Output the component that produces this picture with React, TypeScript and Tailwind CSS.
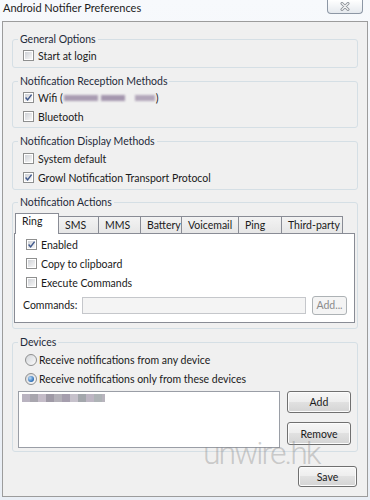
import React from 'react';

const FONT = "font-['Lato','Liberation_Sans',sans-serif]";

const CheckBox: React.FC<{ checked?: boolean }> = ({ checked }) => (
  <span className="relative w-[11px] h-[11px] shrink-0 border border-[#8e8f8f] bg-white p-[1px]">
    <span className="block w-full h-full bg-gradient-to-br from-[#cfd2d7] to-[#f7f7f7]" />
    {checked && (
      <svg className="absolute left-0 top-0" width="9" height="9" viewBox="0 0 9 9">
        <path d="M1.6 4.6 L3.6 6.9 L7.6 1.6" fill="none" stroke="#40598c" strokeWidth="1.5" />
      </svg>
    )}
  </span>
);

const Radio: React.FC<{ checked?: boolean }> = ({ checked }) => (
  <span className="w-[12px] h-[12px] shrink-0 rounded-full border border-[#8e8f8f] bg-gradient-to-br from-[#d3d6da] to-[#fbfbfb] flex items-center justify-center">
    {checked && (
      <span className="w-[6px] h-[6px] rounded-full bg-[radial-gradient(circle_at_35%_35%,#b8dcfa,#2a6cb5_70%,#1b4f8a)]" />
    )}
  </span>
);

const CheckRow: React.FC<{ checked?: boolean; children: React.ReactNode }> = ({ checked, children }) => (
  <div className="h-[19px] flex items-center gap-[4px]">
    <CheckBox checked={checked} />
    <span>{children}</span>
  </div>
);

const RadioRow: React.FC<{ checked?: boolean; children: React.ReactNode }> = ({ checked, children }) => (
  <div className="h-[19px] flex items-center gap-[2px]">
    <Radio checked={checked} />
    <span>{children}</span>
  </div>
);

const Group: React.FC<{ title: string; className?: string; children: React.ReactNode }> = ({
  title,
  className = '',
  children,
}) => (
  <fieldset className={`border border-[#d5dfe5] rounded-[3px] ${className}`}>
    <legend className="ml-[5px] px-[2px] leading-[14px] text-[#1e2a3a]">{title}</legend>
    {children}
  </fieldset>
);

const Button: React.FC<{ className?: string; children: React.ReactNode }> = ({ className = '', children }) => (
  <button className={`rounded-[3px] border border-[#707070] bg-[linear-gradient(to_bottom,#f6f6f6_0%,#ededed_50%,#e1e1e1_50%,#d4d4d4_100%)] shadow-[inset_0_0_0_1px_#fcfcfc] text-[10.5px] leading-[14px] text-[#1a1a1a] flex items-center justify-center ${className}`}>
    {children}
  </button>
);

const TABS = [
  { label: 'SMS', w: 'w-[40px]' },
  { label: 'MMS', w: 'w-[42px]' },
  { label: 'Battery', w: 'w-[41px]' },
  { label: 'Voicemail', w: 'w-[57px]' },
  { label: 'Ping', w: 'w-[43px]' },
  { label: 'Third-party', w: 'w-[61px]' },
];

const PIXELS = [
  'bg-[#b9b3c0]',
  'bg-[#a8a6ae]',
  'bg-[#c4bcc8]',
  'bg-[#9f9aa6]',
  'bg-[#b3b0b8]',
  'bg-[#a59ead]',
  'bg-[#c6c1cb]',
  'bg-[#a3a7ac]',
  'bg-[#bdb6c3]',
  'bg-[#aeb3b6]',
];

export default function App() {
  return (
    <div className={`relative w-[370px] h-[500px] overflow-hidden flex flex-col bg-[linear-gradient(to_bottom,#f7f9fc,#e9eef5)] text-[10.5px] leading-[14px] text-[#1a1a1a] ${FONT}`}>
      {/* Title bar */}
      <div className="h-[21px] shrink-0 flex items-start justify-between pl-[3px] pr-[7px]">
        <span className="pt-[1px] text-[11px] text-[#1b1b1b]">Android Notifier Preferences</span>
        <div className="w-[36px] h-[14px] border-x border-b border-[#8d97a5] rounded-b-[4px] bg-[linear-gradient(to_bottom,#ffffff,#e5e9ee)] flex items-center justify-center">
          <svg width="10" height="9" viewBox="0 0 10 9">
            <path d="M2 1.5 L8 7.5 M8 1.5 L2 7.5" stroke="#8a8f96" strokeWidth="3" strokeLinecap="round" />
            <path d="M2 1.5 L8 7.5 M8 1.5 L2 7.5" stroke="#f4f4f4" strokeWidth="1.2" strokeLinecap="round" />
          </svg>
        </div>
      </div>

      {/* Window body */}
      <div className="mx-[2px] border border-[#9c9c9c] bg-[#f0f0f0] flex flex-col px-[9px] pt-[10px] pb-[9px]">
        <Group title="General Options">
          <div className="pl-[10px] pb-[2px]">
            <CheckRow>Start at login</CheckRow>
          </div>
        </Group>

        <Group title="Notification Reception Methods" className="mt-[6px]">
          <div className="pl-[10px] pb-[1px]">
            <CheckRow checked>
              <span className="inline-flex items-center">
                Wifi (
                <span className="inline-flex items-center gap-[3px] blur-[1px] mx-[1px]">
                  <span className="w-[34px] h-[6px] bg-[#a99cb2]" />
                  <span className="w-[24px] h-[6px] bg-[#a496ae]" />
                  <span className="w-[4px]" />
                  <span className="w-[20px] h-[6px] bg-[#b2a6ba]" />
                </span>
                )
              </span>
            </CheckRow>
            <CheckRow>Bluetooth</CheckRow>
          </div>
        </Group>

        <Group title="Notification Display Methods" className="mt-[6px]">
          <div className="pl-[10px] pt-[1px] pb-[2px]">
            <CheckRow>System default</CheckRow>
            <CheckRow checked>Growl Notification Transport Protocol</CheckRow>
          </div>
        </Group>

        <Group title="Notification Actions" className="mt-[5px]">
          <div className="pl-[1px] pr-[2px] pt-[4px] pb-[5px]">
            {/* Tab strip */}
            <div className="flex items-end pl-[1px]">
              <div className="relative z-10 w-[44px] h-[21px] -mb-px border-x border-t border-[#898c95] bg-white pl-[6px] whitespace-nowrap">
                Ring
              </div>
              {TABS.map((t) => (
                <div
                  key={t.label}
                  className={`${t.w} h-[17px] border-t border-r border-[#898c95] bg-[linear-gradient(to_bottom,#f3f3f3,#e6e6e6)] pl-[6px] flex items-center whitespace-nowrap overflow-hidden`}
                >
                  {t.label}
                </div>
              ))}
            </div>
            {/* Tab panel */}
            <div className="border border-[#898c95] bg-white pt-[1px] pb-[7px]">
              <div className="pl-[11px]">
                <CheckRow checked>Enabled</CheckRow>
                <CheckRow>Copy to clipboard</CheckRow>
                <CheckRow>Execute Commands</CheckRow>
              </div>
              <div className="mt-[3px] h-[20px] flex items-center pl-[8px] pr-[7px]">
                <span>Commands:</span>
                <div className="ml-[5px] flex-1 h-[17px] border border-[#c5c7cb] bg-[#f4f4f4]" />
                <div className="ml-[6px] w-[35px] h-[19px] rounded-[3px] border border-[#adb2b5] bg-[#f4f4f4] text-[#8a8a8a] flex items-center justify-center">
                  Add...
                </div>
              </div>
            </div>
          </div>
        </Group>

        <Group title="Devices" className="mt-[6px]">
          <div className="pl-[12px] pt-[1px]">
            <RadioRow>Receive notifications from any device</RadioRow>
            <RadioRow checked>Receive notifications only from these devices</RadioRow>
          </div>
          <div className="mt-[3px] pl-[5px] pr-[6px] pb-[3px] flex gap-[7px]">
            <div className="flex-1 h-[57px] border border-[#9a9ea6] bg-white pl-[3px] pt-[2px]">
              <div className="flex h-[8px] blur-[0.5px]">
                {PIXELS.map((c, i) => (
                  <span key={i} className={`w-[8px] h-[8px] ${c}`} />
                ))}
                <span className="w-[3px] h-[8px] bg-[#b8b4bd]" />
              </div>
            </div>
            <div className="w-[64px] flex flex-col">
              <Button className="h-[22px]">Add</Button>
              <Button className="h-[23px] mt-[9px]">Remove</Button>
            </div>
          </div>
        </Group>

        <div className="mt-[14px] flex justify-end pr-[1px]">
          <Button className="w-[59px] h-[21px]">Save</Button>
        </div>
      </div>

      {/* Watermark */}
      <div className="absolute left-[203px] top-[443px] pointer-events-none font-['Roboto',sans-serif] font-light text-[32px] leading-[20px] tracking-[-2px] text-[#888888]/40">
        unwire.hk
      </div>
    </div>
  );
}
